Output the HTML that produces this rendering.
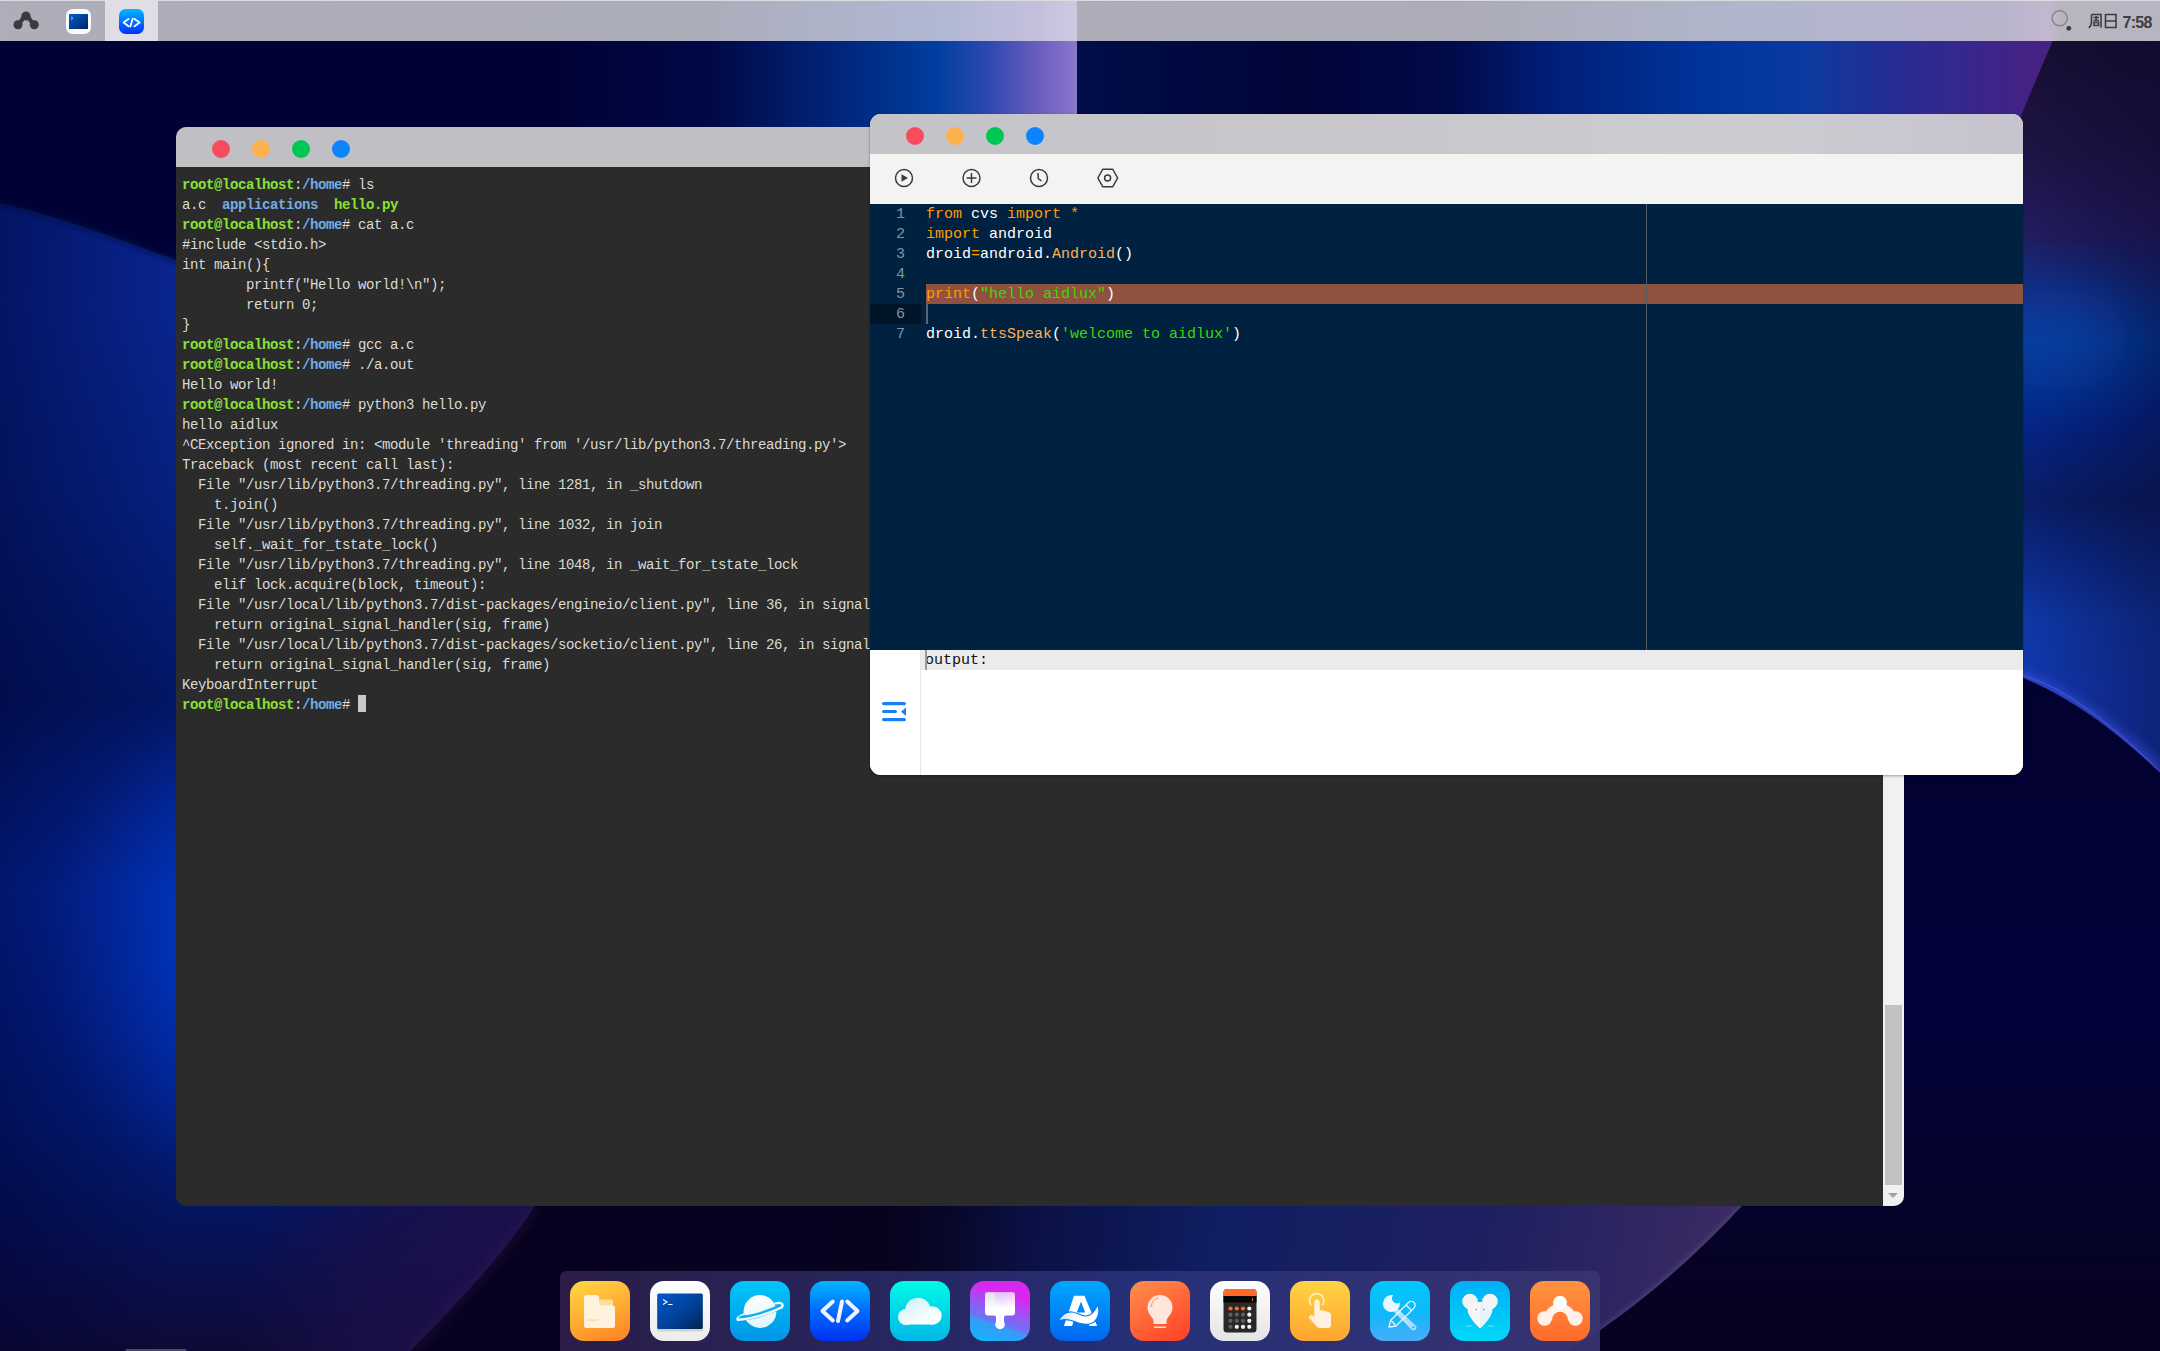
<!DOCTYPE html>
<html><head><meta charset="utf-8">
<style>
*{margin:0;padding:0;box-sizing:border-box}
html,body{width:2160px;height:1351px;overflow:hidden;background:#01022e;font-family:"Liberation Sans",sans-serif}
#wall{position:absolute;left:0;top:0;width:2160px;height:1351px}
#topbar{position:absolute;left:0;top:0;width:2160px;height:41px;background:linear-gradient(90deg,#aeadb9 0px,#acadba 700px,#b0b8d4 940px,#c4c0dc 1040px,#cfc8e2 1076px,#adacb8 1078px,#acacb8 1460px,#b0b6cc 1750px,#b8b4cc 2000px,#c2b8d0 2048px,#b6b5c0 2062px,#b6b5c2 2160px);border-top:1px solid #dcdce0}
.win{position:absolute;overflow:hidden}
#term{left:176px;top:127px;width:1728px;height:1079px;border-radius:10px;background:#2b2b2b}
#term .tb{position:absolute;left:0;top:0;width:100%;height:40px;background:#c0bfc4}
.dot{position:absolute;width:18px;height:18px;border-radius:50%}
#edit{left:870px;top:114px;width:1153px;height:661px;border-radius:11px;background:#fff;box-shadow:0 1px 3px rgba(0,0,0,0.35)}
#edit .tb{position:absolute;left:0;top:0;width:100%;height:40px;background:linear-gradient(90deg,#c4c4c8 0%,#c9c9cd 50%,#cdcdd1 75%,#c8c5cf 95%,#c6c4ce 100%)}
#edit .tool{position:absolute;left:0;top:40px;width:100%;height:50px;background:#f3f4f2}
#edit .code{position:absolute;left:0;top:90px;width:100%;height:446px;background:#002240}
#dock{position:absolute;left:560px;top:1271px;width:1040px;height:80px;border-radius:6px 6px 0 0;background:linear-gradient(90deg,rgba(44,30,72,.95),rgba(40,50,122,.9) 55%,rgba(58,52,112,.9))}
.ic{position:absolute;top:10px;width:60px;height:60px;border-radius:14px;overflow:hidden}
.tt{position:absolute;left:6px;top:48px;font-family:"Liberation Mono",monospace;font-size:14px;line-height:20px;letter-spacing:-0.4px;color:#dcdad4;white-space:pre}
.tt b{font-weight:bold}
.tt .g{color:#8ae234}
.tt .u{color:#74ace4}
.cur{display:inline-block;width:8px;height:17px;background:#c8c8c8;vertical-align:-3px}
.sb{position:absolute;left:1707px;top:0;width:21px;height:1079px;background:#f1f1f1}
.sb .th{position:absolute;left:2px;top:878px;width:17px;height:180px;background:#c1c1c1}
.sb .ar{position:absolute;left:5px;top:1066px;width:0;height:0;border-left:5px solid transparent;border-right:5px solid transparent;border-top:5px solid #a3a3a3}
#edit .code{overflow:hidden}
.gut{position:absolute;left:0;top:1px;width:35px;font-family:"Liberation Mono",monospace;font-size:15px;line-height:20px;color:#8393a3;text-align:right}
.gact{position:absolute;left:0;top:100px;width:51px;height:20px;background:#001628}
.hl{position:absolute;left:56px;top:80px;width:1097px;height:20px;background:#8f5140}
.rul{position:absolute;left:776px;top:0;width:1px;height:446px;background:#555a5e}
.caret{position:absolute;left:56px;top:100px;width:2px;height:20px;background:#5b6670}
.src{position:absolute;left:56px;top:1px;font-family:"Liberation Mono",monospace;font-size:15px;line-height:20px;color:#fff;white-space:pre}
.src .k{color:#ff9d00}
.src .f{color:#ffb054}
.src .s{color:#3ad900}
.outp{position:absolute;left:0;top:536px;width:1153px;height:125px;background:#fff}
.side{position:absolute;left:0;top:0;width:51px;height:125px;border-right:1px solid #e6e6e6}
.ol{position:absolute;left:51px;top:0;width:1102px;height:20px;background:#ebebeb;font-family:"Liberation Mono",monospace;font-size:15px;line-height:21px;color:#111;padding-left:4px}
.ol:before{content:"";position:absolute;left:4px;top:0;width:2px;height:20px;background:#9a9a9a}
.clk{position:absolute;left:2088px;top:12px;width:70px;height:18px}
.clk span{position:absolute;left:34.5px;top:1px;font-family:"Liberation Sans",sans-serif;font-weight:bold;font-size:16px;letter-spacing:-0.75px;color:#3c3d42;line-height:18px}
</style></head><body>
<svg id="wall" width="2160" height="1351" viewBox="0 0 2160 1351">
<defs>
<filter id="b30" x="-50%" y="-50%" width="200%" height="200%"><feGaussianBlur stdDeviation="30"/></filter>
<filter id="b15" x="-50%" y="-50%" width="200%" height="200%"><feGaussianBlur stdDeviation="15"/></filter>
<filter id="b6" x="-50%" y="-50%" width="200%" height="200%"><feGaussianBlur stdDeviation="6"/></filter>
<filter id="b3" x="-50%" y="-50%" width="200%" height="200%"><feGaussianBlur stdDeviation="2.5"/></filter>
<linearGradient id="gTopL" x1="560" y1="0" x2="1077" y2="0" gradientUnits="userSpaceOnUse">
<stop offset="0" stop-color="#000236"/><stop offset="0.29" stop-color="#000845"/><stop offset="0.45" stop-color="#001c6a"/><stop offset="0.62" stop-color="#002f8a"/><stop offset="0.733" stop-color="#0040a0"/><stop offset="0.83" stop-color="#3048b0"/><stop offset="0.936" stop-color="#7060c0"/><stop offset="1" stop-color="#8a78cc"/>
</linearGradient>
<linearGradient id="gTopR" x1="1077" y1="0" x2="2060" y2="0" gradientUnits="userSpaceOnUse">
<stop offset="0" stop-color="#000d48"/><stop offset="0.227" stop-color="#000538"/><stop offset="0.379" stop-color="#000a48"/><stop offset="0.48" stop-color="#001e78"/><stop offset="0.634" stop-color="#00339a"/><stop offset="0.736" stop-color="#0a3aa0"/><stop offset="0.837" stop-color="#282c94"/><stop offset="0.939" stop-color="#3e2488"/><stop offset="1" stop-color="#4a2080"/>
</linearGradient>
<linearGradient id="gRight" x1="0" y1="41" x2="0" y2="790" gradientUnits="userSpaceOnUse">
<stop offset="0" stop-color="#170f33"/><stop offset="0.147" stop-color="#1e1445"/><stop offset="0.254" stop-color="#231c5e"/><stop offset="0.347" stop-color="#0f2f88"/><stop offset="0.4" stop-color="#003a98"/><stop offset="0.507" stop-color="#05268a"/><stop offset="0.614" stop-color="#0a1d66"/><stop offset="0.694" stop-color="#0b2a88"/><stop offset="0.774" stop-color="#0f38a8"/><stop offset="0.854" stop-color="#1238b0"/><stop offset="1" stop-color="#1238b0"/>
</linearGradient>
<linearGradient id="gRightH" x1="2023" y1="0" x2="2160" y2="0" gradientUnits="userSpaceOnUse">
<stop offset="0" stop-color="#000020" stop-opacity="0"/><stop offset="1" stop-color="#0a0528" stop-opacity="0.4"/>
</linearGradient>
<linearGradient id="gLeft" x1="0" y1="200" x2="0" y2="1351" gradientUnits="userSpaceOnUse">
<stop offset="0" stop-color="#08248e"/><stop offset="0.09" stop-color="#082590"/><stop offset="0.26" stop-color="#05207e"/><stop offset="0.435" stop-color="#021664"/><stop offset="0.6" stop-color="#0228a0"/><stop offset="0.7" stop-color="#012290"/><stop offset="0.8" stop-color="#011c78"/><stop offset="0.9" stop-color="#061258"/><stop offset="1" stop-color="#0e0a35"/>
</linearGradient>
<linearGradient id="gLeftH" x1="0" y1="0" x2="176" y2="0" gradientUnits="userSpaceOnUse">
<stop offset="0" stop-color="#000030" stop-opacity="0.45"/><stop offset="1" stop-color="#000030" stop-opacity="0"/>
</linearGradient>
<radialGradient id="gPlanetL" cx="190" cy="1110" r="480" gradientUnits="userSpaceOnUse">
<stop offset="0" stop-color="#0028a8"/><stop offset="0.25" stop-color="#021c80"/><stop offset="0.5" stop-color="#08145c"/><stop offset="0.75" stop-color="#161048"/><stop offset="1" stop-color="#1c0e40"/>
</radialGradient>
<linearGradient id="gPlanetR" x1="950" y1="1206" x2="1700" y2="1351" gradientUnits="userSpaceOnUse">
<stop offset="0" stop-color="#0c1650" stop-opacity="0"/><stop offset="0.2" stop-color="#0c1650" stop-opacity="0.8"/><stop offset="0.35" stop-color="#101e62"/><stop offset="0.7" stop-color="#1e2060"/><stop offset="1" stop-color="#3a2a62"/>
</linearGradient>
<linearGradient id="gMid" x1="560" y1="0" x2="1300" y2="0" gradientUnits="userSpaceOnUse">
<stop offset="0" stop-color="#07021f"/><stop offset="0.45" stop-color="#07031f"/><stop offset="0.8" stop-color="#0c1450"/><stop offset="1" stop-color="#0f1a5c"/>
</linearGradient>
<linearGradient id="gBR" x1="0" y1="668" x2="0" y2="1351" gradientUnits="userSpaceOnUse">
<stop offset="0" stop-color="#02012e"/><stop offset="0.5" stop-color="#03023a"/><stop offset="1" stop-color="#07021f"/>
</linearGradient>
<radialGradient id="rGlow1" cx="200" cy="950" r="230" gradientUnits="userSpaceOnUse" gradientTransform="translate(200 950) scale(0.7 1) translate(-200 -950)">
<stop offset="0" stop-color="#0038c8" stop-opacity="0.75"/><stop offset="1" stop-color="#0038c8" stop-opacity="0"/>
</radialGradient>
<radialGradient id="rPurp" cx="560" cy="1351" r="330" gradientUnits="userSpaceOnUse">
<stop offset="0" stop-color="#22104a" stop-opacity="1"/><stop offset="0.6" stop-color="#1a1048" stop-opacity="0.8"/><stop offset="1" stop-color="#1a1048" stop-opacity="0"/>
</radialGradient>
</defs>
<rect width="2160" height="1351" fill="#03032e"/>
<!-- top strip -->
<rect x="0" y="0" width="1077" height="300" fill="#000236"/>
<rect x="560" y="0" width="517" height="300" fill="url(#gTopL)"/>
<rect x="1077" y="0" width="1083" height="300" fill="url(#gTopR)"/>
<!-- right strip -->
<path d="M2070,0 L2160,0 L2160,770 C2110,730 2060,690 2023,680 L1900,680 L1900,400 Z" fill="url(#gRight)"/>
<path d="M2070,0 L2160,0 L2160,770 C2110,730 2060,690 2023,680 L1900,680 L1900,400 Z" fill="url(#gRightH)"/>
<ellipse cx="2060" cy="340" rx="70" ry="50" fill="#0a44b0" opacity="0.5" filter="url(#b30)"/>
<!-- below right curve -->
<path d="M1990,668 C2040,678 2100,715 2160,773" fill="none" stroke="#3a50d8" stroke-width="10" filter="url(#b6)" opacity="0.8"/>
<path d="M1990,668 C2040,678 2100,715 2160,773 L2160,1351 L1890,1351 L1890,668 Z" fill="url(#gBR)"/>
<path d="M2023,676.5 C2060,688 2100,715 2160,773" fill="none" stroke="#4a5ae0" stroke-width="1.5" opacity="0.6" transform="translate(0,-1.5)"/>
<!-- left blue body -->
<rect x="0" y="0" width="176" height="400" fill="#000236"/>
<path d="M-40,195 C60,212 130,245 200,268 L700,420 L700,1206 L535,1206 C500,1260 450,1310 411,1351 L-40,1351 Z" fill="url(#gLeft)"/>
<path d="M-40,195 C60,212 130,245 200,268" fill="none" stroke="#02104a" stroke-width="6" opacity="0.6" filter="url(#b3)"/>
<path d="M-40,195 C60,212 130,245 200,268 L700,420 L700,1206 L535,1206 C500,1260 450,1310 411,1351 L-40,1351 Z" fill="url(#rGlow1)"/>
<path d="M-40,195 C60,212 130,245 200,268 L700,420 L700,1206 L535,1206 C500,1260 450,1310 411,1351 L-40,1351 Z" fill="url(#rPurp)"/>
<rect x="0" y="190" width="176" height="1161" fill="url(#gLeftH)"/>
<!-- bottom strip -->
<path d="M535,1206 C500,1260 450,1310 411,1351 L2160,1351 L2160,1206 Z" fill="#07021f"/>
<rect x="560" y="1206" width="1200" height="145" fill="url(#gMid)"/>

<path d="M535,1206 C500,1260 450,1310 411,1351" fill="none" stroke="#3a1c5a" stroke-width="8" filter="url(#b6)" opacity="0.35"/>
<path d="M950,1206 L1742,1206 C1710,1240 1660,1290 1593,1335 L1565,1351 L950,1351 Z" fill="url(#gPlanetR)"/>
<path d="M1742,1206 C1710,1240 1660,1290 1593,1335 L1565,1351" fill="none" stroke="#9a80b0" stroke-width="2" filter="url(#b3)" opacity="0.6"/>
<path d="M1742,1206 C1710,1240 1660,1290 1593,1335 L1565,1351 L2160,1351 L2160,1206 Z" fill="url(#gBR)"/>
<rect x="1904" y="775" width="256" height="576" fill="url(#gBR)"/>
<rect x="126" y="1349" width="60" height="2" fill="#8a8a9a" opacity="0.5"/>
</svg>
<div id="topbar">
<svg width="2160" height="41" style="position:absolute;left:0;top:-1px">
<rect x="105" y="0" width="53" height="42" fill="#dfdee4"/>
<g stroke="#3a3b3f" stroke-width="4.2" fill="none" stroke-linecap="round" stroke-linejoin="round"><path d="M18,24.8 C21.5,22.5 23,15.7 26,15.7 C29,15.7 30.5,22.5 34.3,24.8"/></g>
<g fill="#3a3b3f"><circle cx="18" cy="24.8" r="4.5"/><circle cx="26" cy="16" r="4.6"/><circle cx="34.3" cy="24.8" r="4.5"/></g>
<defs>
<linearGradient id="tg1" x1="0" y1="0" x2="1" y2="1"><stop offset="0" stop-color="#0060d0"/><stop offset="1" stop-color="#002260"/></linearGradient>
<linearGradient id="tg2" x1="0" y1="0" x2="0" y2="1"><stop offset="0" stop-color="#00b8ff"/><stop offset="1" stop-color="#0030ff"/></linearGradient>
</defs>
<rect x="66" y="9" width="25" height="25" rx="6.5" fill="#fafafa"/>
<rect x="69" y="14" width="19" height="15" fill="url(#tg1)"/>
<path d="M71,17 L73,18.3 L71,19.6" stroke="#cfe0ff" stroke-width="0.7" fill="none"/>
<rect x="119" y="9" width="25" height="25" rx="6.5" fill="url(#tg2)"/>
<g stroke="#fff" stroke-width="1.8" fill="none" stroke-linecap="round" stroke-linejoin="round"><path d="M128.5,19 L123.6,22.6 L128.5,26.2 M134.5,19 L139.6,22.6 L134.5,26.2 M132.7,18.6 L130.4,26.6"/></g>
<circle cx="2059.7" cy="18.3" r="7.6" fill="none" stroke="#8a8a90" stroke-width="1.6"/>
<circle cx="2068.8" cy="28.3" r="2.4" fill="#3a3b3f"/>
</svg>
<div class="clk"><svg width="30" height="16" style="position:absolute;left:0;top:0px"><g stroke="#3c3d42" stroke-width="1.6" fill="none"><path d="M3.5,1.5 H13 V14.5 M3.5,1.5 V9 C3.5,12 2.5,13.5 0.8,14.8"/><path d="M5.5,4.5 H11 M8.2,3 V7.5 M5.5,7.5 H11"/><path d="M6,9.5 H10.5 V12.5 H6 Z"/><path d="M17.5,1.5 H28 V14.5 H17.5 Z M17.5,8 H28"/></g></svg><span>7:58</span></div>
</div>
<div class="win" id="term"><div class="tb">
<div class="dot" style="left:36px;top:13px;background:#f64d5e"></div>
<div class="dot" style="left:76px;top:13px;background:#fdb04e"></div>
<div class="dot" style="left:116px;top:13px;background:#00c653"></div>
<div class="dot" style="left:156px;top:13px;background:#0a84ff"></div>
</div><pre class="tt"><b class="g">root@localhost</b>:<b class="u">/home</b># ls
a.c  <b class="u">applications</b>  <b class="g">hello.py</b>
<b class="g">root@localhost</b>:<b class="u">/home</b># cat a.c
#include &lt;stdio.h&gt;
int main(){
        printf("Hello world!\n");
        return 0;
}
<b class="g">root@localhost</b>:<b class="u">/home</b># gcc a.c
<b class="g">root@localhost</b>:<b class="u">/home</b># ./a.out
Hello world!
<b class="g">root@localhost</b>:<b class="u">/home</b># python3 hello.py
hello aidlux
^CException ignored in: &lt;module 'threading' from '/usr/lib/python3.7/threading.py'&gt;
Traceback (most recent call last):
  File "/usr/lib/python3.7/threading.py", line 1281, in _shutdown
    t.join()
  File "/usr/lib/python3.7/threading.py", line 1032, in join
    self._wait_for_tstate_lock()
  File "/usr/lib/python3.7/threading.py", line 1048, in _wait_for_tstate_lock
    elif lock.acquire(block, timeout):
  File "/usr/local/lib/python3.7/dist-packages/engineio/client.py", line 36, in signal_handler
    return original_signal_handler(sig, frame)
  File "/usr/local/lib/python3.7/dist-packages/socketio/client.py", line 26, in signal_handler
    return original_signal_handler(sig, frame)
KeyboardInterrupt
<b class="g">root@localhost</b>:<b class="u">/home</b># <span class="cur"></span></pre><div class="sb"><div class="th"></div><div class="ar"></div></div></div>
<div class="win" id="edit"><div class="tb">
<div class="dot" style="left:36px;top:13px;background:#f64d5e"></div>
<div class="dot" style="left:76px;top:13px;background:#fdb04e"></div>
<div class="dot" style="left:116px;top:13px;background:#00c653"></div>
<div class="dot" style="left:156px;top:13px;background:#0a84ff"></div>
</div><div class="tool">
<svg width="1153" height="50" style="position:absolute;left:0;top:0">
<g fill="none" stroke="#3a3a3a" stroke-width="1.5">
<circle cx="34" cy="24" r="8.5"/>
<circle cx="101.5" cy="24" r="8.5"/>
<circle cx="169" cy="24" r="8.5"/>
</g>
<path d="M31.5,20.2 L38,24 L31.5,27.8 Z" fill="#3a3a3a"/>
<path d="M101.5,19 V29 M96.5,24 H106.5" stroke="#3a3a3a" stroke-width="1.5"/>
<path d="M168,19 L168.3,24.5 L171.5,27" fill="none" stroke="#3a3a3a" stroke-width="1.5"/>
<polygon points="232.8,15.2 242.7,15.2 247.6,24 242.7,32.8 232.8,32.8 227.9,24" fill="none" stroke="#3a3a3a" stroke-width="1.5"/>
<circle cx="237.6" cy="24" r="3" fill="none" stroke="#3a3a3a" stroke-width="1.5"/>
</svg></div><div class="code">
<div class="hl"></div>
<div class="gact"></div>
<div class="gut"><div>1</div><div>2</div><div>3</div><div>4</div><div>5</div><div>6</div><div>7</div></div>
<div class="rul"></div>
<div class="caret"></div>
<pre class="src"><span class="k">from</span> cvs <span class="k">import</span> <span class="k">*</span>
<span class="k">import</span> android
droid<span class="k">=</span>android.<span class="f">Android</span>()

<span class="k">print</span>(<span class="s">"hello aidlux"</span>)

droid.<span class="f">ttsSpeak</span>(<span class="s">'welcome to aidlux'</span>)</pre>
</div>
<div class="outp">
<div class="side"><svg width="50" height="125"><g fill="#1a7ff5"><rect x="12" y="52" width="24" height="3.2" rx="1.6"/><rect x="12" y="60" width="15" height="3" rx="1.5"/><rect x="12" y="68" width="24" height="3.2" rx="1.6"/><path d="M36,57.5 L36,66 L31,61.8 Z"/></g></svg></div>
<div class="ol">output:</div>
</div></div>
<div id="dock"><svg width="1040" height="80" style="position:absolute;left:0;top:0">
<defs>
<clipPath id="rr"><rect x="0" y="0" width="60" height="60" rx="14"/></clipPath>
<linearGradient id="d1" x1="0.3" y1="0" x2="0.7" y2="1"><stop offset="0" stop-color="#ffd23e"/><stop offset="0.5" stop-color="#ffae34"/><stop offset="1" stop-color="#ff8626"/></linearGradient>
<linearGradient id="d2" x1="0" y1="0" x2="0" y2="1"><stop offset="0" stop-color="#ffffff"/><stop offset="1" stop-color="#ececec"/></linearGradient>
<linearGradient id="d2b" x1="0" y1="0" x2="1" y2="1"><stop offset="0" stop-color="#0058cc"/><stop offset="0.6" stop-color="#003f92"/><stop offset="1" stop-color="#00224e"/></linearGradient>
<linearGradient id="d3" x1="0" y1="0" x2="0" y2="1"><stop offset="0" stop-color="#00c6fb"/><stop offset="1" stop-color="#0095e6"/></linearGradient>
<linearGradient id="d4" x1="0" y1="0" x2="0" y2="1"><stop offset="0" stop-color="#00b6ff"/><stop offset="0.45" stop-color="#0072ff"/><stop offset="1" stop-color="#0030f0"/></linearGradient>
<linearGradient id="d5" x1="0" y1="0" x2="0" y2="1"><stop offset="0" stop-color="#00fae6"/><stop offset="0.55" stop-color="#00d4e8"/><stop offset="1" stop-color="#00b8e6"/></linearGradient>
<linearGradient id="d6" x1="20" y1="75" x2="41" y2="15" gradientUnits="userSpaceOnUse"><stop offset="0" stop-color="#00c4fc"/><stop offset="0.5" stop-color="#3a98f8"/><stop offset="0.51" stop-color="#6678f4"/><stop offset="0.78" stop-color="#a050f2"/><stop offset="1" stop-color="#d828f0"/></linearGradient>
<linearGradient id="d7" x1="0" y1="0" x2="0" y2="1"><stop offset="0" stop-color="#00a8ff"/><stop offset="1" stop-color="#0066f0"/></linearGradient>
<linearGradient id="d8" x1="0.2" y1="0" x2="0.8" y2="1"><stop offset="0" stop-color="#ff8a4a"/><stop offset="1" stop-color="#ff4428"/></linearGradient>
<linearGradient id="d9" x1="0" y1="0" x2="0" y2="1"><stop offset="0" stop-color="#ffffff"/><stop offset="1" stop-color="#e4e4e4"/></linearGradient>
<linearGradient id="d10" x1="0" y1="0" x2="0" y2="1"><stop offset="0" stop-color="#ffd444"/><stop offset="1" stop-color="#ffa430"/></linearGradient>
<linearGradient id="d11" x1="0" y1="0" x2="0" y2="1"><stop offset="0" stop-color="#00c8fc"/><stop offset="0.55" stop-color="#10b8f8"/><stop offset="1" stop-color="#48acf8"/></linearGradient>
<linearGradient id="d12" x1="0" y1="0" x2="0" y2="1"><stop offset="0" stop-color="#00aef8"/><stop offset="1" stop-color="#00d8f8"/></linearGradient>
<linearGradient id="d13" x1="0" y1="0" x2="0" y2="1"><stop offset="0" stop-color="#ff9440"/><stop offset="1" stop-color="#ff6a2a"/></linearGradient>
<linearGradient id="wf" x1="0" y1="0" x2="1" y2="1"><stop offset="0" stop-color="#fff6e0"/><stop offset="1" stop-color="#fffaf2"/></linearGradient>
</defs>
<!-- 1 files -->
<g transform="translate(10,10)" clip-path="url(#rr)"><rect width="60" height="60" fill="url(#d1)"/>
<rect x="27" y="18.5" width="16" height="8" rx="2" fill="#ffe9b8" opacity="0.8"/>
<path d="M14,16.5 Q14,14 16.5,14 H26.5 Q29,14 29,16.5 V24.5 H42.5 Q45,24.5 45,27 V44.5 Q45,47 42.5,47 H16.5 Q14,47 14,44.5 Z" fill="url(#wf)" opacity="0.93"/>
<rect x="17" y="38.5" width="11" height="1.2" fill="#f8d8a0"/></g>
<!-- 2 terminal -->
<g transform="translate(90,10)" clip-path="url(#rr)"><rect width="60" height="60" fill="url(#d2)"/>
<rect x="7" y="13" width="46" height="36" rx="1.5" fill="#000" opacity="0.12" transform="translate(0,1.5)"/>
<rect x="7.2" y="12.4" width="45.6" height="35.6" rx="1.5" fill="url(#d2b)"/>
<path d="M13,18.5 L17,21 L13,23.5 M18,23.5 H22.5" stroke="#ffffff" stroke-width="1.1" fill="none"/></g>
<!-- 3 browser -->
<g transform="translate(170,10)" clip-path="url(#rr)"><rect width="60" height="60" fill="url(#d3)"/>
<defs><linearGradient id="pl" x1="0" y1="0" x2="0.3" y2="1"><stop offset="0" stop-color="#ffffff"/><stop offset="1" stop-color="#e4f6fc"/></linearGradient></defs>
<circle cx="30" cy="30.5" r="16.4" fill="url(#pl)"/>
<path d="M8,37.5 C20,37 38,31.5 51.5,25.3" stroke="#10b0f0" stroke-width="5" fill="none" stroke-linecap="round"/>
<path d="M8,38.8 C20,38.3 38,33 51.5,26.5" stroke="#f4fbff" stroke-width="2.4" fill="none" stroke-linecap="round"/>
<path d="M45.5,22.3 C49.5,21.3 52.8,22 52.6,24.5 C52.5,25.5 52,26 51.5,26.5 M13.5,33.5 C10,35 7.5,36.5 7.5,38 C7.5,38.6 8,38.8 8.5,38.8" stroke="#f4fbff" stroke-width="2.4" fill="none" stroke-linecap="round"/>
<path d="M8.5,36.6 C12,35 14,34.5 15,34.2" stroke="#10b0f0" stroke-width="1.2" fill="none"/>
</g>
<!-- 4 code -->
<g transform="translate(250,10)" clip-path="url(#rr)"><rect width="60" height="60" fill="url(#d4)"/>
<g stroke="#f4f0ff" stroke-width="4" fill="none" stroke-linecap="round" stroke-linejoin="round"><path d="M22.8,20.5 L12.5,30 L22.8,39.5 M37.2,20.5 L47.5,30 L37.2,39.5 M32,20.5 L28,40"/></g></g>
<!-- 5 cloud -->
<g transform="translate(330,10)" clip-path="url(#rr)"><rect width="60" height="60" fill="url(#d5)"/>
<defs><linearGradient id="cl" x1="22" y1="17" x2="34" y2="44" gradientUnits="userSpaceOnUse"><stop offset="0" stop-color="#d4f2fa"/><stop offset="1" stop-color="#ffffff"/></linearGradient></defs>
<g fill="url(#cl)"><circle cx="16" cy="36" r="8"/><circle cx="28" cy="29.5" r="12.8"/><circle cx="42.5" cy="34.5" r="9.2"/><rect x="16" y="30" width="26.5" height="13.5"/></g></g>
<!-- 6 brush -->
<g transform="translate(410,10)" clip-path="url(#rr)"><rect width="60" height="60" fill="url(#d6)"/>
<defs><linearGradient id="bs1" x1="0" y1="0" x2="0" y2="1"><stop offset="0" stop-color="#e2e2e6"/><stop offset="1" stop-color="#ffffff"/></linearGradient>
<linearGradient id="bs2" x1="0" y1="0" x2="0" y2="1"><stop offset="0" stop-color="#d8c4fa"/><stop offset="1" stop-color="#ffffff"/></linearGradient>
<linearGradient id="bs3" x1="0" y1="0" x2="0" y2="1"><stop offset="0" stop-color="#f0bff8"/><stop offset="1" stop-color="#ffffff"/></linearGradient></defs>
<path d="M17.5,11.5 H42.5 Q45,11.5 45,14 V31.5 Q45,34.4 42,34.4 H36 Q34,34.4 34,36.5 V41 A4.7,4.7 0 1 1 26,41 V36.5 Q26,34.4 24,34.4 H18 Q15,34.4 15,31.5 V14 Q15,11.5 17.5,11.5 Z" fill="#ffffff"/>
<rect x="15" y="11.5" width="10" height="16" fill="url(#bs1)"/><rect x="25" y="11.5" width="10" height="16" fill="url(#bs2)"/><rect x="35" y="11.5" width="10" height="16" fill="url(#bs3)"/>
<path d="M15,11.5 H17.5 Q15,11.5 15,14 Z M45,11.5 H42.5 Q45,11.5 45,14 Z" fill="#a060f0"/>
</g>
<!-- 7 A -->
<g transform="translate(490,10)" clip-path="url(#rr)"><rect width="60" height="60" fill="url(#d7)"/>
<path d="M24,14.7 H34.4 L47.2,45 H39.4 L37.2,39 H23.8 L22.2,45 H13.9 Z M31,20.5 L26.7,31.5 H35.2 Z" fill="#ffffff" fill-rule="evenodd"/>
<defs><linearGradient id="sw" x1="10" y1="0" x2="47" y2="0" gradientUnits="userSpaceOnUse"><stop offset="0" stop-color="#c8e8ff"/><stop offset="0.5" stop-color="#ffffff"/><stop offset="1" stop-color="#ffffff"/></linearGradient></defs>
<path d="M9.5,39 C12.5,34 17,31 22,31.5 C27,32 31,35.5 36,35.5 C41,35.5 45,31 47.5,25 C49.5,31 47.5,38.5 42,41.5 C37,44 31,42.5 26,40.5 C20,38 15,37 9.5,39 Z" fill="url(#sw)" stroke="#0878f2" stroke-width="2.2" paint-order="stroke"/>
</g>
<!-- 8 bulb -->
<g transform="translate(570,10)" clip-path="url(#rr)"><rect width="60" height="60" fill="url(#d8)"/>
<path d="M30,14 C37,14 42.5,19.5 42.5,26.5 C42.5,31 40,34 38,36.5 C37,38 36.5,39 36.5,41 V43 H23.5 V41 C23.5,39 23,38 22,36.5 C20,34 17.5,31 17.5,26.5 C17.5,19.5 23,14 30,14 Z" fill="#fde6dc"/>
<path d="M21.5,26 C21.5,21 25,17.5 28.5,17" stroke="#ff8a5c" stroke-width="1" fill="none"/>
<rect x="24" y="45.5" width="12" height="1.5" fill="#fde0d4"/></g>
<!-- 9 calc -->
<g transform="translate(650,10)" clip-path="url(#rr)"><rect width="60" height="60" fill="url(#d9)"/>
<path d="M17,8 H43 Q46.5,8 46.5,11.5 V48 Q46.5,51.5 43,51.5 H17 Q13.5,51.5 13.5,48 V11.5 Q13.5,8 17,8 Z" fill="#282828"/>
<path d="M17,8 H43 Q46.5,8 46.5,11.5 V15 H13.5 V11.5 Q13.5,8 17,8 Z" fill="#ff6a28"/>
<rect x="13.5" y="15" width="33" height="6.5" fill="#050505"/>
<rect x="42" y="17" width="1" height="3" fill="#ff6a28"/>
<g fill="#ff6a28"><circle cx="20.5" cy="27.5" r="2.1"/><circle cx="26.8" cy="27.5" r="2.1"/><circle cx="33" cy="27.5" r="2.1"/></g>
<g fill="#5e5e5e"><circle cx="20.5" cy="33.7" r="2.1"/><circle cx="26.8" cy="33.7" r="2.1"/><circle cx="33" cy="33.7" r="2.1"/><circle cx="20.5" cy="39.8" r="2.1"/><circle cx="26.8" cy="39.8" r="2.1"/><circle cx="33" cy="39.8" r="2.1"/><circle cx="20.5" cy="45.8" r="2.1"/></g>
<g fill="#f4f4f4"><circle cx="39.3" cy="27.5" r="2.1"/><circle cx="39.3" cy="33.7" r="2.1"/><circle cx="39.3" cy="39.8" r="2.1"/><circle cx="39.3" cy="45.8" r="2.1"/><circle cx="26.8" cy="45.8" r="2.1"/><circle cx="33" cy="45.8" r="2.1"/></g></g>
<!-- 10 touch -->
<g transform="translate(730,10)" clip-path="url(#rr)"><rect width="60" height="60" fill="url(#d10)"/>
<path d="M21.2,24.3 A7.2,7.2 0 1 1 32.2,24.3" stroke="#fff3dc" stroke-width="1.5" fill="none"/>
<path d="M24.3,21.5 C24.3,19.5 25.5,18.2 27,18.2 C28.5,18.2 29.7,19.5 29.7,21.5 V29.3 C33,29.3 40.5,30.8 41,33.3 V44 C41,46 39.5,47 37.5,47 H29.5 C28,47 27,46 26.3,45 L19.5,37.5 C18.5,36 19,34.7 20.3,34.2 C21.7,33.7 23,34.2 24.3,35.5 Z" fill="#fff1de"/>
</g>
<!-- 11 tools -->
<g transform="translate(810,10)" clip-path="url(#rr)"><rect width="60" height="60" fill="url(#d11)"/>
<path d="M27,27 L45.5,44.5 A2.8,2.8 0 0 1 41.5,48.5 L23,30 Z" fill="#b0e0fc"/>
<circle cx="43.3" cy="46.3" r="1.3" fill="#48b0f4"/>
<path d="M23.2,14.3 A8.5,8.5 0 1 0 29.8,21.2 A4.8,4.8 0 0 1 23.2,14.3 Z" fill="#e8f6fe"/>
<path d="M19,46 L20.5,39.5 L38.5,21.5 C40,20 42.5,20 44,21.5 C45.5,23 45.5,25.5 44,27 L26,45 Z M21,39.5 L25.5,44 M36,24 L41.5,29.5" stroke="#e8f6fe" stroke-width="1.3" fill="none" stroke-linejoin="round"/>
</g>
<!-- 12 mouse -->
<g transform="translate(890,10)" clip-path="url(#rr)"><rect width="60" height="60" fill="url(#d12)"/>
<circle cx="20" cy="20.5" r="7.8" fill="#f2f2f2"/><circle cx="40" cy="20.5" r="7.8" fill="#f4f4f4"/>
<path d="M18,24 C22,20 38,20 42,24 C44,30 41,37 30,47.5 C19,37 16,30 18,24 Z" fill="#f6f6f6"/>
<path d="M30,22 V47.5 C36,42 41,36 42,28 Z" fill="#e6f4fa"/>
<circle cx="26.3" cy="28.5" r="0.8" fill="#2aa4e4"/><circle cx="33.7" cy="28.5" r="0.8" fill="#2aa4e4"/>
<path d="M16,45 H22 M38,45 H44" stroke="#7ee0fa" stroke-width="1"/></g>
<!-- 13 aidlux -->
<g transform="translate(970,10)" clip-path="url(#rr)"><rect width="60" height="60" fill="url(#d13)"/>
<path d="M14,38.5 A16,16 0 0 1 46,38.5 L37.8,38.5 A7.8,7.8 0 0 0 22.2,38.5 Z" fill="#fff4ec"/>
<circle cx="14.6" cy="37.5" r="7.3" fill="#fff0e8"/><circle cx="30" cy="21.7" r="6.9" fill="#ffffff"/><circle cx="45.4" cy="37.5" r="7.3" fill="#fff0e8"/></g>
</svg></div>
</body></html>
